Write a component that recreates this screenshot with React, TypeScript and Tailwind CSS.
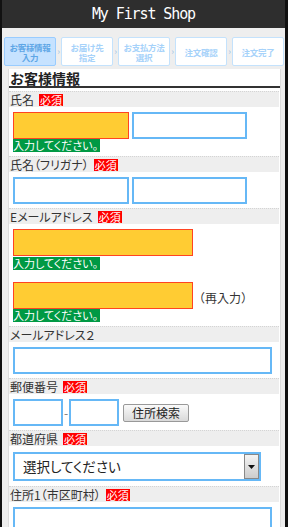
import React from 'react'

const steps = [
  { label: ['お客様情報', '入力'], active: true },
  { label: ['お届け先', '指定'], active: false },
  { label: ['お支払方法', '選択'], active: false },
  { label: ['注文確認'], active: false },
  { label: ['注文完了'], active: false },
]

function Required() {
  return <span className="bg-[#ff0000] text-white text-[11px] leading-[12px] px-[1px]">必須</span>
}

function Label({ text, required = true }: { text: string; required?: boolean }) {
  return (
    <div className="h-[16px] mr-[1px] flex items-center gap-[5px] bg-[#eeeeee] border-t border-dotted border-[#d4d4d4] pl-[1px] text-[12px] leading-[15px] text-[#333] [font-feature-settings:'palt']">
      <span>{text}</span>
      {required && <Required />}
    </div>
  )
}

function Error() {
  return (
    <div className="w-fit h-[13px] pr-[2px] bg-[#009944] text-white text-[11px] leading-[13px] whitespace-nowrap [font-feature-settings:'palt']">
      入力してください。
    </div>
  )
}

const blue = 'h-[27px] bg-white border-2 border-[#66b8f6] outline-none'
const orange = 'h-[27px] bg-[#ffcc33] border border-[#ff4422] outline-none'

export default function App(): React.ReactElement {
  return (
    <div className="w-[288px] h-[527px] overflow-hidden bg-[#111] pl-[2px] pr-[3px] font-['Noto_Sans_CJK_JP',sans-serif]">
      <div className="h-full bg-[#eeeeee] flex flex-col">
        {/* Title bar */}
        <div className="h-[28px] shrink-0 bg-[#2e2e2e] flex items-center justify-center">
          <span className="text-white text-[15px] tracking-[-1.1px] font-['DejaVu_Sans_Mono',monospace]">My First Shop</span>
        </div>

        {/* Steps */}
        <div className="flex items-center pl-[2px] pt-[9px] pb-[3px]">
          {steps.map((s, i) => (
            <React.Fragment key={i}>
              {i > 0 && <span className="w-[5px] text-center text-[9px] leading-[10px] text-[#9fc4e6]">›</span>}
              <div
                className={`w-[52px] h-[29px] flex flex-col items-center justify-center rounded-[2px] text-[8.5px] leading-[10px] font-bold whitespace-nowrap tracking-[-0.3px] ${
                  s.active ? 'bg-[#c6e2ff] border border-[#99ccff] text-[#5ea6e6]' : 'bg-white border border-[#c4e2fc] text-[#a6d2fa]'
                }`}
              >
                {s.label.map((l) => <span key={l} className="block h-[10px] leading-[10px]">{l}</span>)}
              </div>
            </React.Fragment>
          ))}
        </div>

        {/* Form panel */}
        <div className="flex-1 ml-[6px] mr-[4px] bg-white border-x border-[#dddddd]">
          <div className="pt-[1px] pl-[1px] leading-[16px] text-[14px] font-bold text-[#222] border-b-2 border-[#333]">お客様情報</div>

          <div className="mt-[3px]">
            <Label text="氏名" />
            <div className="pl-[4px] pt-[5px] pb-[4px]">
              <div className="flex gap-[3px]">
                <input className={`${orange} w-[116px]`} />
                <input className={`${blue} w-[115px]`} />
              </div>
              <Error />
            </div>

            <Label text="氏名（フリガナ）" />
            <div className="pl-[4px] pt-[5px] pb-[4px] flex gap-[3px]">
              <input className={`${blue} w-[116px]`} />
              <input className={`${blue} w-[115px]`} />
            </div>

            <Label text="Eメールアドレス" />
            <div className="pl-[4px] pt-[5px] pb-[4px]">
              <input className={`${orange} w-[180px] block`} />
              <div className="mt-[1px]"><Error /></div>
              <div className="mt-[12px] flex items-center">
                <input className={`${orange} w-[180px]`} />
                <span className="text-[12px] text-[#333] leading-[14px] mt-[4px]">（再入力）</span>
              </div>
              <Error />
            </div>

            <Label text="メールアドレス２" required={false} />
            <div className="pl-[4px] pt-[5px] pb-[4px]">
              <input className={`${blue} w-[259px] block`} />
            </div>

            <Label text="郵便番号" />
            <div className="pl-[4px] pt-[5px] pb-[4px] flex items-center">
              <input className={`${blue} w-[50px]`} />
              <span className="w-[6px] text-center text-[12px] text-[#777]">-</span>
              <input className={`${blue} w-[50px]`} />
              <button className="ml-[4px] w-[66px] h-[18px] rounded-[2px] border border-[#999] bg-gradient-to-b from-[#fafafa] to-[#d9d9d9] text-[12px] leading-[14px] text-[#222]">
                住所検索
              </button>
            </div>

            <Label text="都道府県" />
            <div className="pl-[4px] pt-[6px] pb-[5px]">
              <div className="w-[248px] h-[29px] border-2 border-[#66b8f6] flex items-center justify-between">
                <span className="pl-[8px] text-[13.5px] text-[#222] [font-feature-settings:'palt']">選択してください</span>
                <span className="w-[15px] h-full border border-[#888] bg-gradient-to-b from-[#f4f4f4] to-[#cccccc] flex items-center justify-center">
                  <svg width="7" height="4" viewBox="0 0 7 4"><path d="M0 0h7L3.5 4z" fill="#111" /></svg>
                </span>
              </div>
            </div>

            <Label text="住所1（市区町村）" />
            <div className="pl-[4px] pt-[5px] pb-[4px]">
              <input className={`${blue} w-[259px] block`} />
            </div>
          </div>
        </div>
      </div>
    </div>
  )
}
